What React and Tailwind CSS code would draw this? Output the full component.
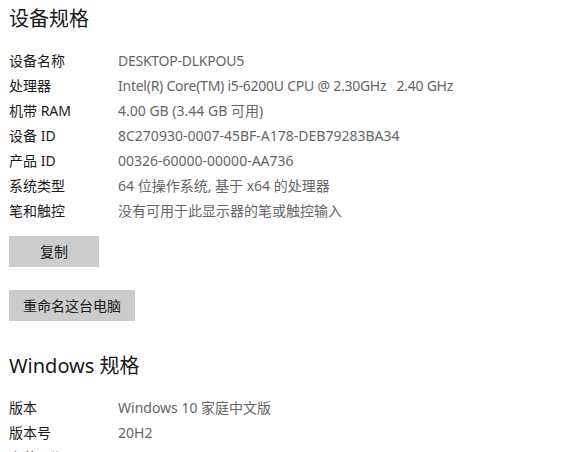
import React from "react";

function Row({ label, value, tight }) {
  return (
    <div className="flex h-[25px] items-center text-[14px] leading-[25px]">
      <div className="w-[109px] shrink-0 text-[#1a1a1a]">{label}</div>
      <div className={tight ? "text-[#666666] whitespace-pre tracking-[-0.25px]" : "text-[#666666] whitespace-pre"}>{value}</div>
    </div>
  );
}

export default function App() {
  return (
    <div className="h-[452px] w-[565px] overflow-hidden bg-white pl-[9px] font-['Noto_Sans','Noto_Sans_CJK_SC',sans-serif]">
      <h1 className="pt-[5px] text-[20px] leading-[28px] text-[#1a1a1a]">设备规格</h1>
      <div className="mt-[15px] flex flex-col">
        <Row label="设备名称" value="DESKTOP-DLKPOU5" tight />
        <Row label="处理器" value={"Intel(R) Core(TM) i5-6200U CPU @ 2.30GHz   2.40 GHz"} tight />
        <Row label="机带 RAM" value="4.00 GB (3.44 GB 可用)" />
        <Row label="设备 ID" value="8C270930-0007-45BF-A178-DEB79283BA34" />
        <Row label="产品 ID" value="00326-60000-00000-AA736" />
        <Row label="系统类型" value="64 位操作系统, 基于 x64 的处理器" />
        <Row label="笔和触控" value="没有可用于此显示器的笔或触控输入" />
      </div>
      <button className="mt-[13px] block h-[31px] w-[90px] bg-[#cccccc] text-[14px] text-[#1a1a1a]">复制</button>
      <button className="mt-[23px] block h-[31px] w-[126px] bg-[#cccccc] text-[14px] text-[#1a1a1a]">重命名这台电脑</button>
      <h1 className="mt-[31px] text-[20px] leading-[28px] text-[#1a1a1a]">Windows 规格</h1>
      <div className="mt-[15px] flex flex-col">
        <Row label="版本" value="Windows 10 家庭中文版" />
        <Row label="版本号" value="20H2" />
        <Row label="安装日期" value="2021/3/15" />
      </div>
    </div>
  );
}
